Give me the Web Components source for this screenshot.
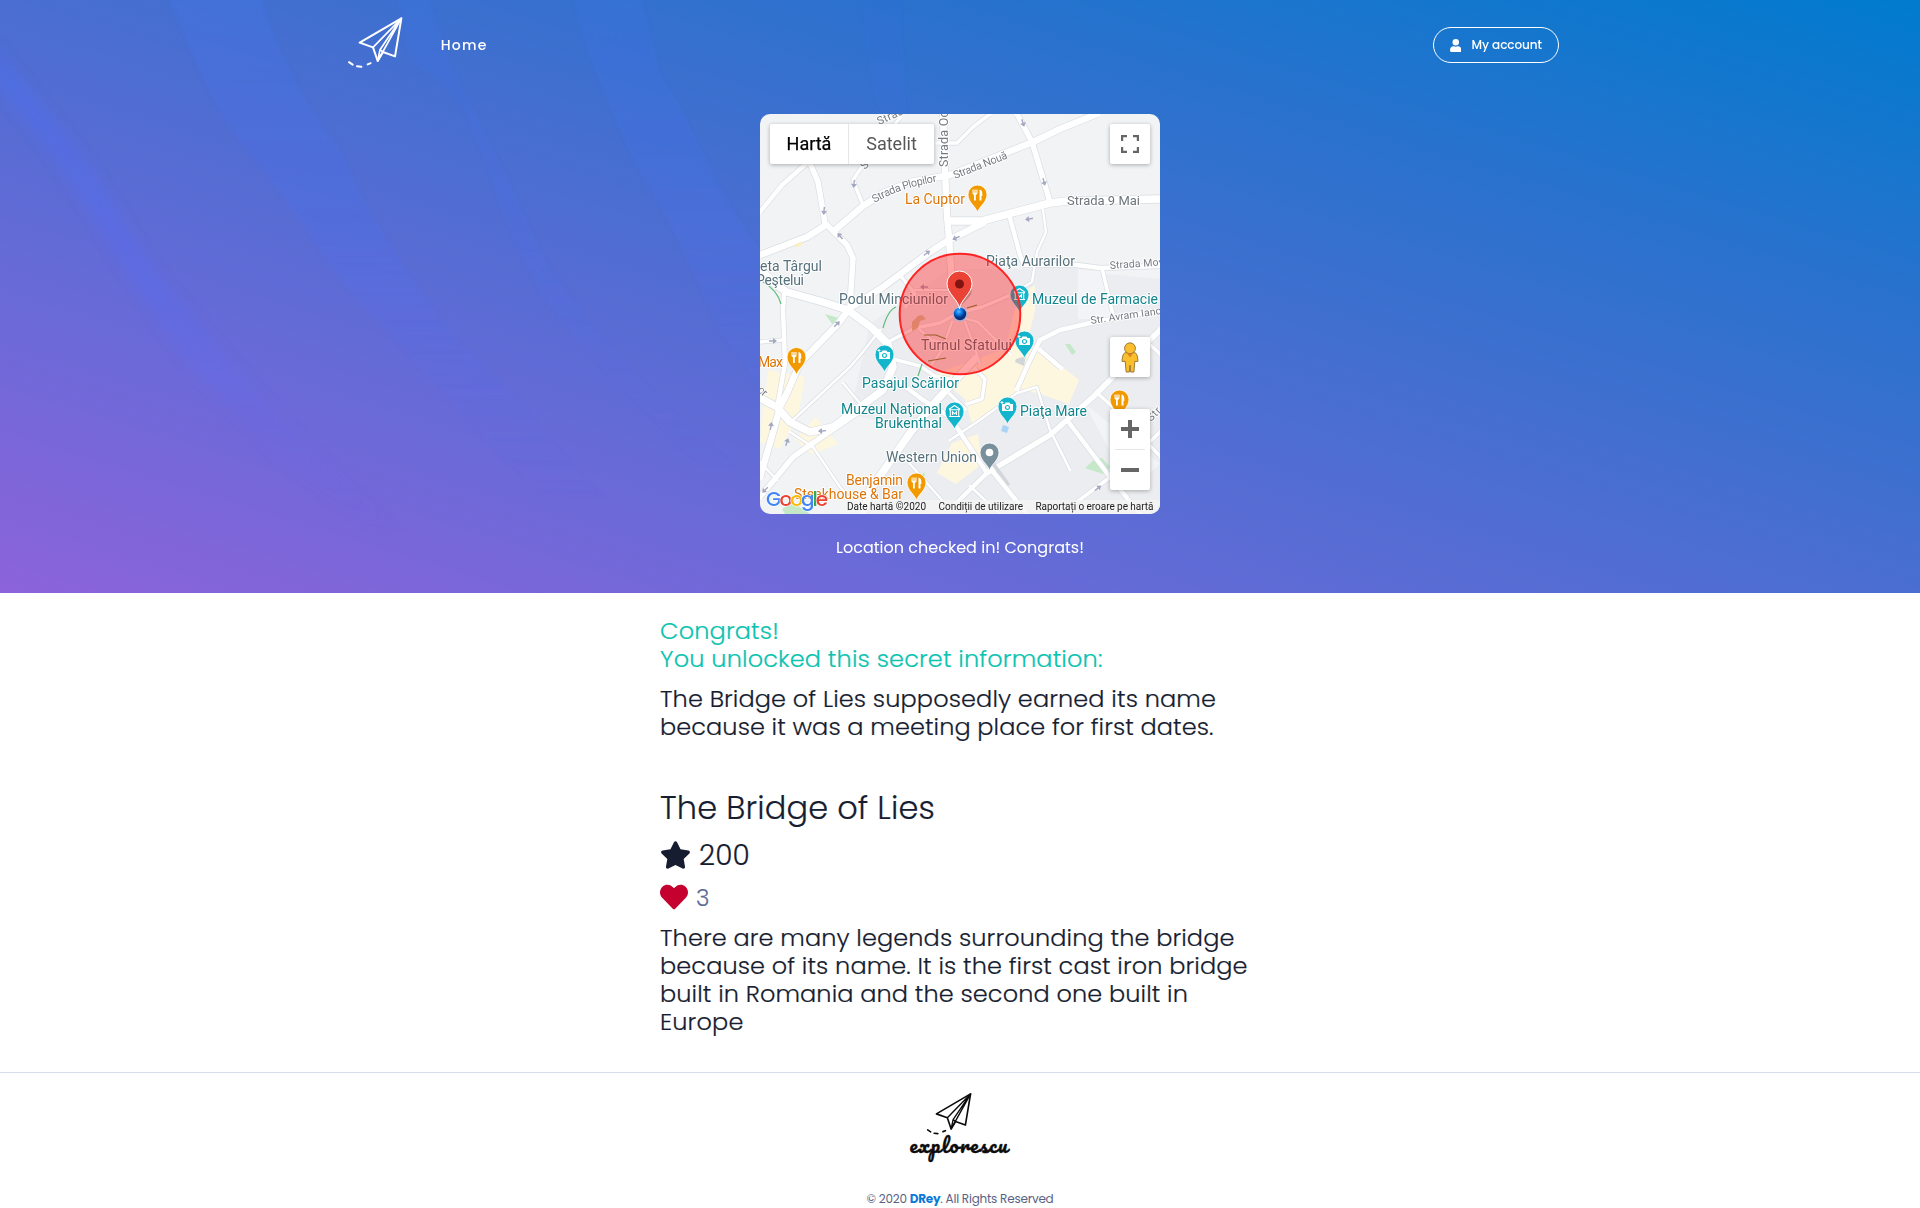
<!DOCTYPE html>
<html lang="en">
<head>
<meta charset="utf-8">
<title>The Bridge of Lies</title>
<style>
html,body{margin:0;padding:0;background:#fff}
body{font-family:Poppins,Inter,"Open Sans",sans-serif;color:#171d30}
</style>
</head>
<body>
<explore-page></explore-page>
<script>
const define=(name,html,after)=>customElements.define(name,class extends HTMLElement{
  connectedCallback(){
    if(this.shadowRoot)return;
    this.attachShadow({mode:'open'}).innerHTML=typeof html==='function'?html(this):html;
    if(after)after(this);
  }
});

/* one line of text tracked to a given measure */
define('fit-text','<style>:host{display:inline-block;white-space:nowrap}</style><slot></slot>',el=>{
  const w=+el.getAttribute('w'),n=el.textContent.length;
  const r=el.getBoundingClientRect().width;
  if(w&&r)el.style.letterSpacing=((w-r)/n).toFixed(3)+'px';
});

define('plane-mark',`<style>:host{display:block}svg{display:block;width:100%;height:100%}</style>
<svg viewBox="50 46 170 158" fill="none" stroke="currentColor" stroke-width="6" stroke-linejoin="round" stroke-linecap="round">
<path d="M213 53 88 126 128 140 142 181 158 154 194 167Z"/><path d="M213 53 128 140M213 53 142 181M213 53 149 147 158 154M149 147 142 181" stroke-width="5"/>
<path d="M56 184.500 67 192M80 197 93 198.500M112 191 121 187.500" stroke-width="6"/></svg>`);

define('fa-icon',el=>{
  const p={
   user:['0 0 448 512','M224 256a128 128 0 1 0 0-256 128 128 0 0 0 0 256zm89.600 32h-16.700c-22.200 10.200-46.900 16-72.900 16s-50.600-5.800-72.900-16h-16.700C60.200 288 0 348.200 0 422.400V464c0 26.500 21.500 48 48 48h352c26.500 0 48-21.500 48-48v-41.600c0-74.200-60.200-134.400-134.400-134.400z'],
   star:['0 0 576 512','M259.300 17.800 194 150.200 47.900 171.500c-26.200 3.800-36.700 36.100-17.700 54.600l105.700 103-25 145.500c-4.500 26.300 23.200 46 46.400 33.700L288 439.600l130.700 68.700c23.200 12.200 50.900-7.400 46.400-33.700l-25-145.500 105.700-103c19-18.500 8.500-50.800-17.700-54.600L382 150.200 316.700 17.800c-11.700-23.600-45.600-23.900-57.400 0z'],
   heart:['0 0 512 512','M462.300 62.600C407.500 15.900 326 24.300 275.700 76.200L256 96.500l-19.700-20.300C186.100 24.300 104.500 15.900 49.700 62.600c-62.800 53.600-66.100 149.800-9.900 207.900l193.500 199.800c12.500 12.900 32.800 12.900 45.300 0l193.500-199.800c56.300-58.100 53-154.300-9.800-207.900z']
  }[el.getAttribute('name')];
  return `<style>:host{display:block;flex:none}svg{display:block;width:100%;height:100%}</style><svg viewBox="${p[0]}" fill="currentColor"><path d="${p[1]}"/></svg>`;
});

define('site-nav',`<style>
:host{display:flex;align-items:center;height:90px;padding:0 361px 0 347px;color:#fff}
plane-mark{width:56.700px;height:52.700px;margin-top:-6px}
.home{font-size:14px;font-weight:500;margin-left:37px;flex:1;line-height:20px}
.btn{box-sizing:border-box;width:126px;height:36px;border:1px solid #fff;border-radius:18px;display:flex;align-items:center;padding-left:15.500px;font-size:12px;font-weight:500}
fa-icon{width:11.500px;height:13px;margin-right:10.500px}
</style><plane-mark></plane-mark><span class="home"><fit-text w="47">Home</fit-text></span><span class="btn"><fa-icon name="user"></fa-icon><fit-text w="70.500">My account</fit-text></span>`);

const pin=(x,y,c,g)=>`<g transform="translate(${x} ${y})"><path d="M0 18C-1.500 12-9.500 8-9.500 0a9.500 9.500 0 0 1 19 0C9.500 8 1.500 12 0 18Z" fill="${c}" stroke="#fff" stroke-width=".8"/>${g}</g>`;
const food='<path d="M-5-5v3.500q0 1.500 1.500 1.700V6h1.800V.2Q0 0 0-1.500V-5h-1.100v3.200h-.8V-5h-1.200v3.200h-.8V-5ZM2-5Q4.800-4.500 4.800-1V1.500H4V6H2Z" fill="#fff"/>';
const cam='<path d="M-5.500-2.500h2.500l1-1.500h4l1 1.500h2.500v7h-11Z" fill="#fff"/><circle cy="1" r="2" fill="#fff" stroke="#12b5cb" stroke-width="1.200"/><path d="M-5.500-5.500v3M-7-4h3" stroke="#fff" stroke-width=".9"/>';
const mus='<path d="M0-6 5.500-2.200M0-6-5.500-2.200M-5.500-1.800H5.500M-4.200-1.500V4.500M4.200-1.500V4.500M-5.500 5H5.500M-2 3.500V.3L0 2.300 2 .3V3.500" fill="none" stroke="#fff" stroke-width="1.100"/>';
const O='#dd7508',T='#11858d',S='#56717c',G='#777c82';
const lab=(t,x,y,w,c,s=14,a=0)=>`<text x="${x}" y="${y}" font-size="${s}" fill="${c}" textLength="${w}"${a?` transform="rotate(${a} ${x} ${y})"`:''}>${t}</text>`;
const arrow=(x,y,a)=>`<path transform="translate(${x} ${y}) rotate(${a})" d="M-4-.7H0V-3L4 0 0 3V.7H-4Z" fill="#a3a8c0"/>`;
/* [path, width] pairs of the street network */
const roads=[
['M0 141 47 123 66 111M75 116 103 92 123 79 150 68 190 61 273 28 300 15 337 0',7],
['M0 98 22 71 47 49 60 35',5],['M50 49 58 68 65 109 87 131 93 144 90 192',6],
['M140 4 105 48 93 66 103 91',4],['M177 29H197L213 13 230 0',4],
['M183 0 185 58 187 101 189 124 192 170',7],['M257 0 272 28 290 88',6],
['M190 107H222L290 89 307 87 400 85',8],['M223 109 187 127 170 138 123 173 90 194 77 211 40 249 27 279 20 293 10 329 0 363',7],
['M250 104 260 141 264 151 317 151 340 154 400 152',5],['M342 154 353 201',4],
['M283 96 286 118 277 138 272 168 262 174',3],
['M0 155 15 170 27 178 63 188 88 196 112 214 128 230 133 253 123 276 100 293 73 313 50 318 30 308 17 293 0 284',8],
['M24 180 23 196 25 249 18 289',5],['M0 228 24 226',4],
['M0 383 33 343 53 329 100 297',6],['M53 333 80 373 92 388M30 318 53 333',3],
['M120 216 102 239 90 253 33 306',3],['M140 161 155 180 146 192',4],['M83 269 104 294M0 348 17 366',3],
['M215 245 177 286 150 319 110 376 103 400',8],['M135 265 163 286 190 303 227 359 190 395',5],
['M227 359 290 321 333 283 353 263 400 216',6],['M190 326 220 306 257 279 277 273 290 316 310 356',3],
['M280 226 270 246 257 275M280 226 300 216 330 209 400 196M280 236 301 254',5],
['M230 354 267 400M307 306 347 359 380 400',5],['M337 279 353 293 400 342M310 393 337 373 360 356 400 318M385 226 400 240',4],
['M210 372 240 400M150 350 182 386',3],['M128 228 155 214 180 209 198 199 222 193 248 182',4],['M133 245 160 252 175 262 190 265',4],
['M155 176H190M200 203 218 208 236 226 250 240M192 208 182 236 172 250M205 208 214 232 220 250M160 216 172 226 190 230',3],
['M215 255 225 265 222 285 207 290M190 280 205 295',4]
];
define('city-map',`<style>
:host{display:block;position:relative;width:400px;height:400px;border-radius:10px;overflow:hidden;background:#f1f3f4;font-family:Roboto,sans-serif}
svg{display:block}
.c{position:absolute;background:#fff;border-radius:2px;box-shadow:0 1px 4px rgba(0,0,0,.3);display:flex;align-items:center;justify-content:center}
.type{left:10px;top:10px;width:164px;height:40px;font-size:18px}
.type span{flex:none;box-sizing:border-box;display:flex;justify-content:center;align-items:center;height:40px;padding-bottom:1px}
.type .a{width:79px;color:#000;-webkit-text-stroke:.25px #000;border-right:1px solid #e6e6e6}.type .b{width:85px;color:#565656}
.full{left:350px;top:10px;width:40px;height:40px}.peg{left:350px;top:223px;width:40px;height:40px}.zoom{left:350px;top:295px;width:40px;height:81px}
</style>
<svg width="400" height="400" viewBox="0 0 400 400">
<path d="M110 210 190 155 265 155 318 151 345 160 400 165V400H100L150 315 90 300Z" fill="#e8eaed" opacity=".6"/>
<path d="M318 155 340 157 352 205 318 205ZM325 290 400 350 370 375Z" fill="#f3f4f7"/>
<path d="M175 260 245 235 255 195 262 180 275 171 275 196 268 225 280 235 319 266 309 290 283 281 262 275 225 300 212 310 205 285ZM8 256 45 263 38 302 20 335 0 328ZM56 303 78 330 52 340 35 325ZM177 359 192 329 218 320 222 350 196 370Z" fill="#fef7e0"/>
<path d="M305 230 310 230 316 238 312 241ZM335 345 342 344 350 353 343 360 325 354ZM22 395 32 388 50 400H25ZM65 200 82 205 73 211ZM160 362 165 358 164 366Z" fill="#c5e8c8"/>
${roads.map(r=>`<path d="${r[0]}" fill="none" stroke="#d9dde2" stroke-width="${r[1]+.8}" stroke-linejoin="round"/>`).join('')}
${roads.map(r=>`<path d="${r[0]}" fill="none" stroke="#fff" stroke-width="${r[1]-.5}" stroke-linejoin="round" stroke-linecap="round"/>`).join('')}
<path d="M0 166Q17 175 21 190M136 193Q128 196 123 214M162 250 158 262" fill="none" stroke="#5dbb78" stroke-width="1.200"/>
<path d="M164 221H176L186 225M168 247 186 244M207 194 217 191" fill="none" stroke="#6d8a3c" stroke-width="1.200"/>
<path d="M152 217V208L158 202 162 201 166 205 160 207 158 214Z" fill="#cfc9a0"/>
<path d="M232 345 250 370 248 372 230 349ZM256 245 266 242 264 252 255 248Z" fill="#d2d5d9"/><path d="M243 311 249 313 247 319 241 317Z" fill="#a9d4f5"/>
<path d="M35 132 42 129" stroke="#fdeec0" stroke-width="3"/>
${arrow(64,97,95)}${arrow(94,70,95)}${arrow(80,122,-130)}${arrow(167,139,-38)}${arrow(196,124,155)}${arrow(164,173,180)}${arrow(269,105,170)}${arrow(263,9,72)}${arrow(284,68,75)}${arrow(77,210,-45)}${arrow(13,227,0)}${arrow(62,317,175)}${arrow(11,312,-80)}${arrow(27,328,-72)}${arrow(5,376,135)}${arrow(338,374,-38)}
<g paint-order="stroke" stroke="#fff" stroke-width="2" stroke-linejoin="round">
${lab('Strada',119,11,34,G,11,-24)}${lab('Stra',105,56,20,G,11,-48)}
${lab('Strada Oc',187.500,53,56,G,12.500,-90)}
<path id="plop" d="M115 89Q138 74 181 67" fill="none" stroke="none"/><text font-size="11" fill="${G}"><textPath href="#plop" textLength="66">Strada Plopilor</textPath></text>
${lab('Strada Nouă',195,65,57,G,11,-21.500)}${lab('Strada 9 Mai',307,90.500,73,'#6d757b',13)}
${lab('Strada Mov',350,155,54,G,10.500,-4)}${lab('Str. Avram Iancu',331,210,77,G,10.500,-8)}${lab('Str.',391,308,18,G,11,-45)}${lab('or',-3,277,9,G,11,40)}
${lab('La Cuptor',145,90,60,O)}${lab('Max',-2,253,25,O)}${lab('Benjamin',86,371,57,O)}${lab('Steakhouse &amp; Bar',34,385,109,O)}
${lab('eta Târgul',0,157,62,S)}${lab('Peştelui',-4,171,48,S)}${lab('Podul Minciunilor',79,190,109,S)}${lab('Piaţa Aurarilor',226,152,89,S)}${lab('Turnul Sfatului',161,236,91,S)}${lab('Western Union',126,348,91,S)}
${lab('Muzeul de Farmacie',272,190,126,T)}${lab('Pasajul Scărilor',102,274,97,T)}${lab('Muzeul Naţional',81,300,101,T)}${lab('Brukenthal',115,314,67,T)}${lab('Piaţa Mare',260,302,67,T)}
</g>
${pin(217.500,80.500,'#f29900',food)}${pin(36.500,243,'#f29900',food)}${pin(156.500,368.500,'#f29900',food)}${pin(359.500,285.500,'#f29900',food)}
${pin(259.500,180.500,'#12b5cb',mus)}${pin(194.500,297.500,'#12b5cb',mus)}${pin(264.500,226.500,'#12b5cb',cam)}${pin(124.500,240.500,'#12b5cb',cam)}${pin(247.500,292.500,'#12b5cb',cam)}${pin(229.500,338.500,'#78909c','<circle r="3.800" fill="#fff"/>')}
<circle cx="200" cy="200" r="60.300" fill="#ff0000" fill-opacity=".35" stroke="#ff2222" stroke-width="2"/>
<defs><radialGradient id="b" cx=".4" cy=".3"><stop stop-color="#5cb8ff"/><stop offset=".5" stop-color="#0a7cec"/><stop offset="1" stop-color="#07307c"/></radialGradient></defs>
<path d="M200 193 209 183Q213 178 211 174Z" fill="#7a3a3a" opacity=".35"/>
<circle cx="200" cy="200" r="7.500" fill="#7cc0ff" opacity=".6"/><circle cx="200" cy="200" r="6.200" fill="url(#b)"/>
<path d="M199.500 195C199 186 187 180 187 169.500a12.500 12.500 0 0 1 25 0C212 180 200 186 199.500 195Z" fill="#ea4335" stroke="#fff" stroke-width="1"/><circle cx="199.500" cy="170" r="4.500" fill="#811411"/>
<path d="M80 386H400V400H80Z" fill="#f5f5f5" opacity=".72"/>
<g font-size="10" fill="#222"><text x="87" y="396" textLength="79">Date hartă ©2020</text><text x="178.500" y="396" textLength="84.500">Condiții de utilizare</text><text x="275.500" y="396" textLength="118">Raportați o eroare pe hartă</text></g>
<text x="6" y="391.500" font-family="Poppins,Inter,sans-serif" font-size="20" font-weight="500" textLength="62" stroke="#fff" stroke-width="1.200" paint-order="stroke"><tspan fill="#4285f4">G</tspan><tspan fill="#ea4335">o</tspan><tspan fill="#fbbc05">o</tspan><tspan fill="#4285f4">g</tspan><tspan fill="#34a853">l</tspan><tspan fill="#ea4335">e</tspan></text>
</svg>
<div class="c type"><span class="a">Hartă</span><span class="b">Satelit</span></div>
<div class="c full"><svg width="18" height="18" fill="none" stroke="#666" stroke-width="2.200"><path d="M1.100 6V1.100H6M12 1.100h4.900V6M16.900 12v4.900H12M6 16.900H1.100V12"/></svg></div>
<div class="c peg"><svg width="18" height="31" viewBox="0 0 18 32" fill="#fbbf2d" stroke="#8a6d2c" stroke-width=".9"><path d="M4 11Q1 12 .8 20H4l1 11h3.300L9 24l.7 7H13l1-11h3.200Q17 12 14 11Z"/><circle cx="9" cy="6.500" r="5.600"/><path d="M5 10.500 9 16 13 10.500Q9 13 5 10.500Z" fill="#d98226" stroke="none"/></svg></div>
<div class="c zoom"><svg width="40" height="81"><path d="M11 20H29M20 11V29M11 61H29" stroke="#666" stroke-width="4"/><path d="M5 40.500H35" stroke="#e6e6e6"/></svg></div>`);

define('hero-section',`<style>
:host{display:block;height:593px;background:linear-gradient(to top right,#8c63da,#6a6ad8 25%,#4a6ed1 50%,#2872cd 75%,#007bce);position:relative;overflow:hidden}
.rays{position:absolute;inset:0}
.in{position:relative;display:flex;flex-direction:column}
city-map{margin:24px auto 0}
.msg{display:flex;justify-content:center;margin-top:22px;color:#fff;font-size:16px;line-height:24px}
</style>
<svg class="rays" width="1920" height="593"><defs><linearGradient id="r" x1="0" y1="0" x2="0" y2="593" gradientUnits="userSpaceOnUse"><stop stop-color="#3f74ee" stop-opacity=".26"/><stop offset=".4" stop-color="#4c70f2" stop-opacity=".24"/><stop offset=".85" stop-color="#5a6cf0" stop-opacity="0"/></linearGradient>
<linearGradient id="e" x1="0" y1="0" x2="0" y2="593" gradientUnits="userSpaceOnUse"><stop stop-color="#4a70f4" stop-opacity=".4"/><stop offset=".5" stop-color="#5a6cf4" stop-opacity=".36"/><stop offset=".9" stop-color="#6a6cf0" stop-opacity="0"/></linearGradient><filter id="f"><feGaussianBlur stdDeviation="6"/></filter><filter id="h"><feGaussianBlur stdDeviation="1.500"/></filter></defs>
<g fill="url(#r)" filter="url(#h)"><path d="M168-5Q180 30 202 77T257 163Q290 205 318 248T367 310L459 410 600 560H680Q590 490 539 426T465 348Q425 300 392 248T343 155Q310 110 288 66T263-5Z"/><path d="M398-5 429-5Q440 40 456 74T508 178L539 248Q570 300 612 348T735 465L700 465Q600 370 560 320T490 178 430 74 398-5Z" opacity=".65"/><path d="M573-5Q580 30 594 66T631 155L674 232 723 337 800 440 830 400 760 250Q730 210 704 155T661 77L640-5Z" opacity=".85"/><path d="M860-5H900L908 150 875 100Z" opacity=".3"/></g>
<path d="M-5 45 61 128Q95 170 122 217T184 306L257 391 343 480 416 542 370 530 280 460 200 380Q140 300 100 230T-5 85Z" fill="url(#e)" filter="url(#f)"/></svg>
<div class="in"><site-nav></site-nav><city-map></city-map><div class="msg"><fit-text w="248">Location checked in! Congrats!</fit-text></div></div>`);

define('place-details',`<style>
:host{display:flex;flex-direction:column;box-sizing:border-box;width:600px;margin:0 auto;padding-top:24px;height:479px;font-size:24px;font-weight:300;line-height:28px;-webkit-text-stroke:.2px currentColor}
.l{display:flex;flex-direction:column;align-items:flex-start}
.g{color:#0cc3b1}.t{margin-top:12px}
h2{font-size:32px;font-weight:300;line-height:38px;margin:48px 0 0}
.r{display:flex;align-items:center}
.s{font-size:28px;height:34px;margin-top:12px}.s fa-icon{width:31px;height:28px;margin:-2px 8px 0 0}
.h{height:30px;margin-top:10px;color:#5c6b95}.h fa-icon{color:#c4012f;width:28px;height:28px;margin:-2px 8px 0 0}.h span{font-size:23px}
.p{margin-top:11px}
</style>
<div class="l g"><fit-text w="119">Congrats!</fit-text><fit-text w="442.500">You unlocked this secret information:</fit-text></div>
<div class="l t"><fit-text w="556">The Bridge of Lies supposedly earned its name</fit-text><fit-text w="553.500">because it was a meeting place for first dates.</fit-text></div>
<h2><fit-text w="275">The Bridge of Lies</fit-text></h2>
<div class="r s"><fa-icon name="star"></fa-icon><fit-text w="51">200</fit-text></div>
<div class="r h"><fa-icon name="heart"></fa-icon><span>3</span></div>
<div class="l p"><fit-text w="574.500">There are many legends surrounding the bridge</fit-text><fit-text w="587.500">because of its name. It is the first cast iron bridge</fit-text><fit-text w="528">built in Romania and the second one built in</fit-text><fit-text w="83.500">Europe</fit-text></div>`);

define('site-footer',`<style>
:host{display:flex;flex-direction:column;align-items:center;box-sizing:border-box;height:136px;border-top:1px solid #d5dcec;background:#fff}
plane-mark{width:46.500px;height:43.200px;margin:19px 22px 0 0;color:#0b0b0b}
.w{color:#0b0b0b;font:400 20px/24px Pacifico,"Pacifico Regular",cursive;margin:-2px 2px 0 0;-webkit-text-stroke:.4px #0b0b0b}
.c{font-size:12px;line-height:18px;color:#5a6384;margin-top:33px}
b{color:#0b7ad8;font-weight:700}
</style><plane-mark></plane-mark><fit-text class="w" w="99">explorescu</fit-text><fit-text class="c" w="187">© 2020 <b>DRey</b>. All Rights Reserved</fit-text>`);

define('explore-page','<style>:host{display:block;height:1208px;overflow:hidden}</style><hero-section></hero-section><place-details></place-details><site-footer></site-footer>');
</script>
</body>
</html>
